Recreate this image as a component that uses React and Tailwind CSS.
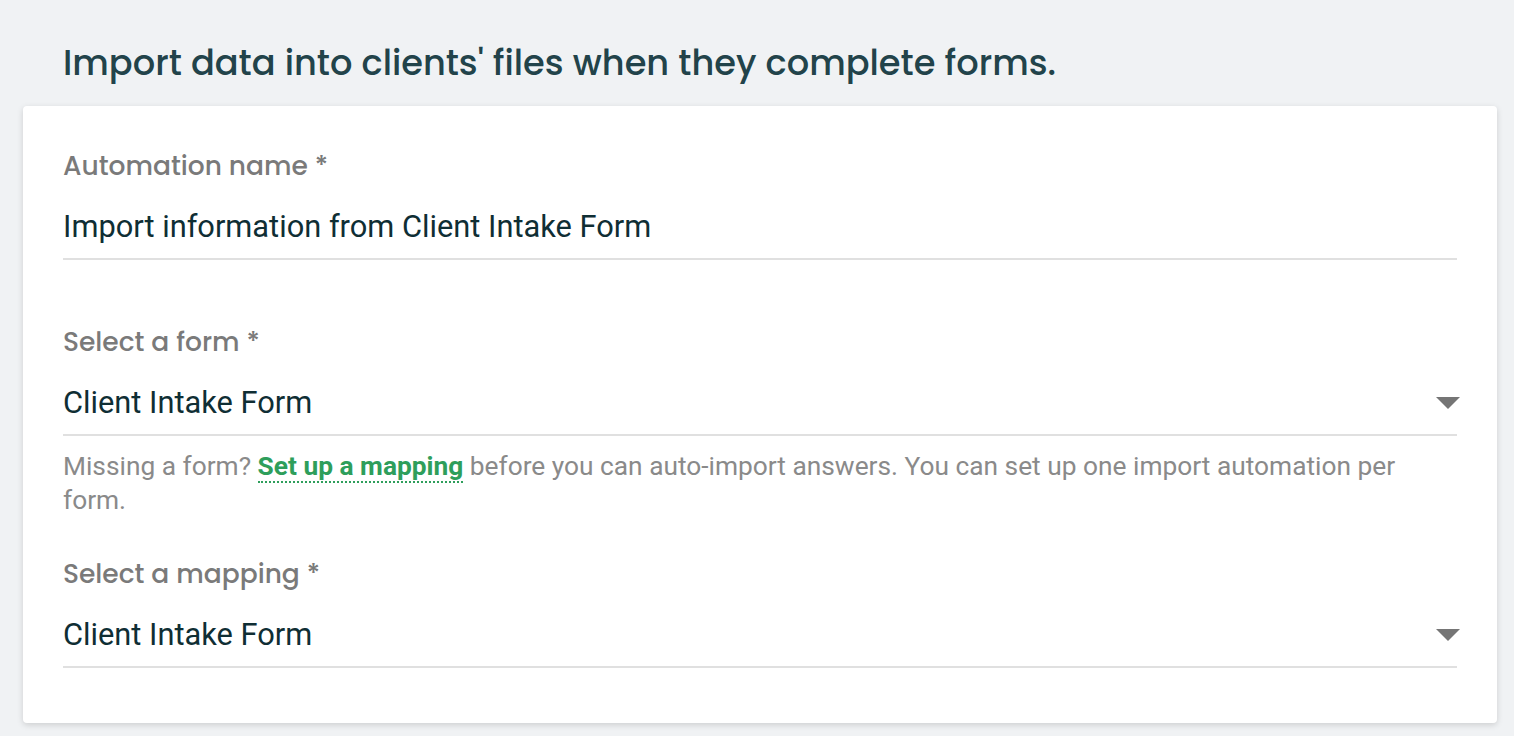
import React from 'react';

const heading = { fontFamily: 'Poppins, Inter, "Noto Sans", sans-serif' };

const Caret = () => (
  <svg width="24" height="12" viewBox="0 0 24 12" className="shrink-0">
    <path d="M0 0 H24 L12 12 Z" fill="#757575" />
  </svg>
);

const Field = ({ label, value, select, className = '' }) => (
  <div className={className}>
    <div className="text-[26.5px] leading-[36px] text-[#7a7a7a] font-medium" style={heading}>
      {label}
    </div>
    <div className="mt-[23px] flex items-center justify-between border-b-2 border-[#e0e0e0] pb-[11px]">
      <span className="font-['Roboto',sans-serif] text-[30.8px] leading-[40px] text-[#0f2e34]">{value}</span>
      {select && <div className="mr-[-3px]"><Caret /></div>}
    </div>
  </div>
);

export default function App() {
  return (
    <div className="min-h-screen bg-[#f0f2f4] px-[23px] pt-[40px] pb-[13px]">
      <h1
        className="pl-[40px] text-[35.2px] leading-[46px] font-medium text-[#22434a]"
        style={heading}
      >
        Import data into clients' files when they complete forms.
      </h1>
      <div className="mt-[20px] w-[1474px] rounded-[4px] bg-white px-[40px] pt-[42px] pb-[55px] shadow-[0_2px_6px_rgba(0,0,0,0.15)]">
        <Field label="Automation name *" value="Import information from Client Intake Form" />
        <Field className="mt-[64px]" label="Select a form *" value="Client Intake Form" select />
        <p className="mt-[13px] font-['Roboto',sans-serif] text-[26.3px] leading-[34px] text-[#8a8a8a]">
          Missing a form?{' '}
          <a className="font-bold text-[#2e9e5b] border-b-2 border-dotted border-[#2e9e5b]">Set up a mapping</a>{' '}
          before you can auto-import answers. You can set up one import automation per form.
        </p>
        <Field className="mt-[39px]" label="Select a mapping *" value="Client Intake Form" select />
      </div>
    </div>
  );
}
